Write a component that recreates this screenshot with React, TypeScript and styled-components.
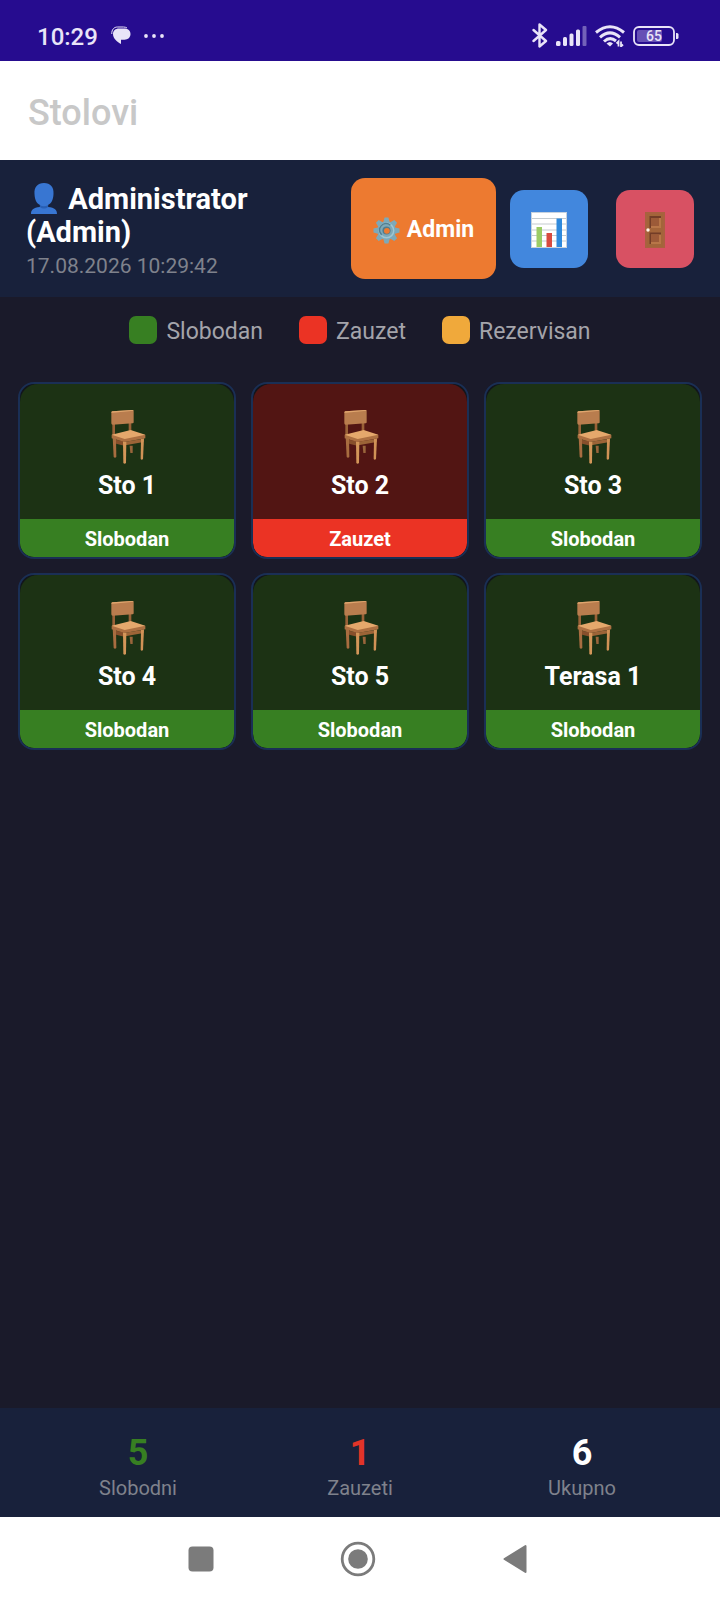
import React from "react";
import styled, { createGlobalStyle } from "styled-components";

const GlobalStyle = createGlobalStyle`
  *, *::before, *::after { box-sizing: border-box; }
  body {
    margin: 0;
    background: #1a1a2a;
    font-family: Roboto, "Liberation Sans", sans-serif;
  }
  button { font: inherit; border: 0; padding: 0; cursor: pointer; }
  svg { display: block; flex: none; }
`;

type TableState = "free" | "busy";

const stateStyles = {
  free: { label: "Slobodan", body: "#1c3214", bar: "#377f22" },
  busy: { label: "Zauzet", body: "#521513", bar: "#eb3324" },
};

const Screen = styled.div`
  display: flex;
  flex-direction: column;
  min-height: 100vh;
`;

const StatusBar = styled.div`
  display: flex;
  align-items: center;
  justify-content: space-between;
  height: 61px;
  padding: 10px 41px 0 37px;
  background: #260c8f;
  color: #e9e4f8;
`;

const StatusGroup = styled.div<{ $gap: number }>`
  display: flex;
  align-items: center;
  gap: ${(p) => p.$gap}px;
`;

const Clock = styled.time`
  padding-top: 2px;
  font-size: 24px;
  line-height: 28px;
  font-weight: 500;
`;

const TitleBar = styled.header`
  display: flex;
  align-items: center;
  height: 99px;
  padding: 4px 28px 0;
  background: #fff;
`;

const Title = styled.h1`
  margin: 0;
  font-size: 36px;
  line-height: 42px;
  font-weight: 500;
  color: #c8c8c8;
`;

const UserBar = styled.section`
  display: flex;
  align-items: center;
  padding: 18px 26px;
  background: #18213b;
`;

const UserInfo = styled.div`
  flex: 1;
  min-width: 0;
  padding: 3px 14px 0 0;
`;

const UserName = styled.div`
  font-size: 29px;
  line-height: 33px;
  font-weight: 700;
  color: #fff;
  svg { display: inline-block; vertical-align: -6px; }
`;

const DateTime = styled.div`
  margin-top: 4px;
  font-size: 21px;
  line-height: 26px;
  color: #7f828c;
`;

const Actions = styled.div`
  display: flex;
  align-items: center;
  gap: 28px;
`;

const ActionButton = styled.button<{ $color: string }>`
  display: flex;
  align-items: center;
  justify-content: center;
  width: 78px;
  height: 78px;
  padding-top: 3px;
  border-radius: 14px;
  background: ${(p) => p.$color};
`;

const AdminButton = styled(ActionButton)`
  gap: 7px;
  width: 145px;
  height: 101px;
  margin-right: -14px;
  font-size: 23px;
  line-height: 28px;
  font-weight: 700;
  color: #fff;
`;

const Legend = styled.ul`
  display: flex;
  justify-content: center;
  gap: 36px;
  margin: 0;
  padding: 19px 18px 36px;
  list-style: none;
`;

const LegendItem = styled.li`
  display: flex;
  align-items: flex-start;
  gap: 9px;
  font-size: 23px;
  line-height: 28px;
  color: #a4a4aa;
`;

const LegendLabel = styled.span`
  padding-top: 2px;
`;

const Swatch = styled.span<{ $color: string }>`
  width: 28px;
  height: 28px;
  border-radius: 7px;
  background: ${(p) => p.$color};
`;

const Grid = styled.main`
  flex: 1;
  display: grid;
  grid-template-columns: repeat(3, 1fr);
  align-content: start;
  gap: 14px 15px;
  padding: 0 18px;
`;

const Card = styled.button`
  border: 2px solid #1a2f55;
  border-radius: 16px;
  background: #12151b;
  overflow: hidden;
`;

const CardInner = styled.span<{ $color: string }>`
  display: flex;
  flex-direction: column;
  align-items: center;
  padding-top: 25px;
  border-radius: 18px 18px 14px 14px;
  overflow: hidden;
  background: ${(p) => p.$color};
`;

const TableName = styled.span`
  margin: 6px 0 18px;
  font-size: 25px;
  line-height: 30px;
  font-weight: 700;
  color: #fff;
`;

const CardStatus = styled.span<{ $color: string }>`
  width: 100%;
  padding: 8px 0 6px;
  font-size: 20px;
  line-height: 24px;
  font-weight: 700;
  text-align: center;
  color: #fff;
  background: ${(p) => p.$color};
`;

const Summary = styled.footer`
  display: flex;
  padding: 24px 27px 17px;
  background: #18213b;
`;

const Stat = styled.div`
  display: flex;
  flex: 1;
  flex-direction: column;
  align-items: center;
  gap: 2px;
`;

const StatValue = styled.strong<{ $color: string }>`
  font-size: 36px;
  line-height: 42px;
  color: ${(p) => p.$color};
`;

const StatLabel = styled.span`
  font-size: 20px;
  line-height: 24px;
  color: #7f828c;
`;

const NavBar = styled.nav`
  display: flex;
  align-items: center;
  justify-content: center;
  gap: 121px;
  height: 84px;
  padding-right: 5px;
  background: #fff;
`;

const NavButton = styled.button`
  background: none;
`;

const Chair = () => (
  <svg width="40" height="56" viewBox="0 0 120 168" aria-hidden="true">
    <path d="M16 42h8v38h-8zM65 38h8v34h-8z" fill="#9a6238" />
    <path d="M68 110h9v22h-7z" fill="#99653b" />
    <path d="M17 84l10 4 1 56q-4 4-8 0z" fill="#a86d40" />
    <path d="M27 92l28 6v13l-28-7z" fill="#874f2b" />
    <path d="M55 98l55-9v10l-55 10z" fill="#9c6437" />
    <path d="M48 97l10 1-1 64q-4 4-8 0z" fill="#d39659" />
    <path d="M102 90l9-2-3 62q-4 4-7 0z" fill="#d09256" />
    <path d="M14 77v11l39 11 62-11V77z" fill="#ad7042" />
    <path d="M14 77l57-14 44 14-62 13z" fill="#e5a86c" />
    <path d="M13 11q0-3 3-4l60-4q4 0 4 4v33q0 3-3 3l-60 4q-4 0-4-4z" fill="#b97d4e" />
    <path d="M13 11q0-3 3-4l60-4q3 0 4 2l-62 6z" fill="#e0a66e" />
  </svg>
);

const Person = () => (
  <svg width="35" height="33" viewBox="-1 0 35 33" aria-hidden="true">
    <path
      d="M17 1C10.500 1 7 5 7.500 12c.3 6 2.200 9.500 5.500 11v2C6 25.500 4 28 4 32h26c0-4-2-6.500-9-7v-2c3.300-1.500 5.200-5 5.500-11C27 5 23.500 1 17 1z"
      fill="#3876d2"
    />
    <path d="M12.800 23q4.200 2.500 8.400 0v2q-4.200 3-8.400 0z" fill="#285fb4" />
  </svg>
);

const Gear = () => (
  <svg width="27" height="27" viewBox="-14 -14 28 28" aria-hidden="true">
    <g fill="#7da9b9">
      {[0, 45, 90, 135, 180, 225, 270, 315].map((a) => (
        <path key={a} d="M-3.500-8l1.500-5.500h4L3.500-8z" transform={`rotate(${a})`} />
      ))}
      <circle r="9.500" />
    </g>
    <circle r="7.500" fill="none" stroke="#9fc7d2" strokeWidth="1.500" />
    <path d="M-5 4.500A6.700 6.700 0 0 1 4-5.500" fill="none" stroke="#527f91" strokeWidth="1.500" />
    <circle r="4.200" fill="#527c8c" />
    <circle cx=".4" cy=".3" r="3" fill="#ed7a30" />
  </svg>
);

const Chart = () => (
  <svg width="36" height="36" viewBox="0 0 36 36" aria-hidden="true">
    <path d="M0 0h36v36H0z" fill="#c6d2df" />
    <path d="M1 1h34v34H1z" fill="#fff" />
    <path d="M1 6.500h34M1 12h34M1 18h34M1 23.500h34M1 29h34" stroke="#c4cbd0" />
    <path d="M5.500 15h5.500v20H5.500z" fill="#9ccc65" />
    <path d="M15.500 21H21v14h-5.500z" fill="#d84a3f" />
    <path d="M25.500 6.500H31V35h-5.500z" fill="#2f89dc" />
  </svg>
);

const Door = () => (
  <svg width="20" height="36" viewBox="0 0 20 36" aria-hidden="true">
    <path d="M0 0h20v36H0z" fill="#a9613f" />
    <path d="M2 2h16v33H2z" fill="#a3653a" />
    <path d="M4.500 4H16v12H4.500zM4.500 20.500H16V32H4.500z" fill="#733d27" />
    <path d="M6 6h10v10H6zM6 22.500h10V32H6z" fill="#b87648" />
    <path d="M6 6h8v8H6zM6 22.500h8V30H6z" fill="#9c5a38" />
    <circle cx="3" cy="18" r="1.700" fill="#fff3e8" />
  </svg>
);

const Chat = () => (
  <svg width="20" height="19" viewBox="0 0 20 19" aria-hidden="true">
    <path
      d="M8 2.500h5c4 0 6.500 2.200 6.500 5.500 0 3.500-2.500 5.700-6 5.700h-3.500V18c-3.500-1.700-8-5.500-8-10 0-3.300 2.500-5.500 6-5.500z"
      fill="currentColor"
    />
    <path d="M.8 8C.5 3.500 3.200 1 6.500 1h6q2 0 3.500 1" fill="none" stroke="currentColor" />
  </svg>
);

const Dots = () => (
  <svg width="20" height="4" viewBox="0 0 20 4" fill="currentColor" aria-hidden="true">
    <circle cx="2" cy="2" r="1.900" />
    <circle cx="10" cy="2" r="1.900" />
    <circle cx="18" cy="2" r="1.900" />
  </svg>
);

const Bluetooth = () => (
  <svg width="16" height="25" viewBox="0 0 16 25" aria-hidden="true">
    <path
      d="M1.500 7l12.500 11-6.500 5.500V1.500L14 7 1.500 18"
      fill="none"
      stroke="currentColor"
      strokeWidth="2.400"
      strokeLinejoin="round"
      strokeLinecap="round"
    />
  </svg>
);

const Signal = () => (
  <svg width="31" height="20" viewBox="0 0 31 20" fill="currentColor" aria-hidden="true">
    <rect x="0" y="15" width="4.500" height="5" rx="1.500" />
    <rect x="7" y="11" width="4" height="9" rx="1.500" />
    <rect x="13.500" y="7.500" width="4" height="12.500" rx="1.500" />
    <rect x="20" y="3.500" width="4" height="16.500" rx="1.500" />
    <rect x="26.500" y="0" width="4" height="20" rx="1" opacity=".4" />
  </svg>
);

const Wifi = () => (
  <svg width="30" height="22" viewBox="0 0 30 22" aria-hidden="true">
    <g fill="none" stroke="currentColor" strokeWidth="3">
      <path d="M1 7.500Q15-4 29 7.500" />
      <path d="M5 12.300Q15 3.500 25 12.300" />
      <path d="M9 16.500Q15 11 21 16" />
    </g>
    <path d="M11.500 18.500q3.500-3 6.500 0L15 21.500z" fill="currentColor" />
    <path d="M23.500 21.500v-5l-2 2M26 16.500v5l2-2" fill="none" stroke="currentColor" strokeWidth="1.800" />
  </svg>
);

const Battery = () => (
  <svg width="46" height="20" viewBox="0 0 46 20" role="img" aria-label="65%">
    <rect x="4" y="4" width="25" height="12" rx="2" fill="#6650b5" />
    <rect x="1" y="1" width="40" height="18" rx="5" fill="none" stroke="currentColor" strokeWidth="1.800" />
    <path d="M43 7h1q1.500 0 1.500 1.500v3q0 1.500-1.500 1.500h-1z" fill="currentColor" />
    <text x="21" y="15" textAnchor="middle" fontSize="14" fontWeight="500" fill="currentColor">65</text>
  </svg>
);

const tables: { name: string; state: TableState }[] = [
  { name: "Sto 1", state: "free" },
  { name: "Sto 2", state: "busy" },
  { name: "Sto 3", state: "free" },
  { name: "Sto 4", state: "free" },
  { name: "Sto 5", state: "free" },
  { name: "Terasa 1", state: "free" },
];

const legend = [
  { label: "Slobodan", color: "#377f22" },
  { label: "Zauzet", color: "#eb3324" },
  { label: "Rezervisan", color: "#f0a93b" },
];

const stats = [
  { value: 5, label: "Slobodni", color: "#377f22" },
  { value: 1, label: "Zauzeti", color: "#e23428" },
  { value: 6, label: "Ukupno", color: "#fff" },
];

export default function App() {
  return (
    <Screen>
      <GlobalStyle />
      <StatusBar>
        <StatusGroup $gap={13}>
          <Clock>10:29</Clock>
          <Chat />
          <Dots />
        </StatusGroup>
        <StatusGroup $gap={8}>
          <Bluetooth />
          <Signal />
          <Wifi />
          <Battery />
        </StatusGroup>
      </StatusBar>
      <TitleBar>
        <Title>Stolovi</Title>
      </TitleBar>
      <UserBar>
        <UserInfo>
          <UserName>
            <Person /> Administrator (Admin)
          </UserName>
          <DateTime>17.08.2026 10:29:42</DateTime>
        </UserInfo>
        <Actions>
          <AdminButton type="button" $color="#ed7a30">
            <Gear />
            Admin
          </AdminButton>
          <ActionButton type="button" $color="#4287dd" aria-label="Statistika">
            <Chart />
          </ActionButton>
          <ActionButton type="button" $color="#d85163" aria-label="Odjava">
            <Door />
          </ActionButton>
        </Actions>
      </UserBar>
      <Legend>
        {legend.map((item) => (
          <LegendItem key={item.label}>
            <Swatch $color={item.color} />
            <LegendLabel>{item.label}</LegendLabel>
          </LegendItem>
        ))}
      </Legend>
      <Grid>
        {tables.map((table) => {
          const look = stateStyles[table.state];
          return (
            <Card key={table.name} type="button">
              <CardInner $color={look.body}>
                <Chair />
                <TableName>{table.name}</TableName>
                <CardStatus $color={look.bar}>{look.label}</CardStatus>
              </CardInner>
            </Card>
          );
        })}
      </Grid>
      <Summary>
        {stats.map((stat) => (
          <Stat key={stat.label}>
            <StatValue $color={stat.color}>{stat.value}</StatValue>
            <StatLabel>{stat.label}</StatLabel>
          </Stat>
        ))}
      </Summary>
      <NavBar>
        <NavButton type="button" aria-label="Nedavne aplikacije">
          <svg width="36" height="36" viewBox="0 0 36 36">
            <rect x="5.500" y="5.500" width="25" height="25" rx="4" fill="#7b7b7b" />
          </svg>
        </NavButton>
        <NavButton type="button" aria-label="Početna">
          <svg width="36" height="36" viewBox="0 0 36 36">
            <circle cx="18" cy="18" r="15.800" fill="none" stroke="#7b7b7b" strokeWidth="2.800" />
            <circle cx="18" cy="18" r="9.800" fill="#7b7b7b" />
          </svg>
        </NavButton>
        <NavButton type="button" aria-label="Nazad">
          <svg width="36" height="36" viewBox="0 0 36 36">
            <path
              d="M7.500 18L28.500 5v26z"
              fill="#7b7b7b"
              stroke="#7b7b7b"
              strokeWidth="2"
              strokeLinejoin="round"
            />
          </svg>
        </NavButton>
      </NavBar>
    </Screen>
  );
}
